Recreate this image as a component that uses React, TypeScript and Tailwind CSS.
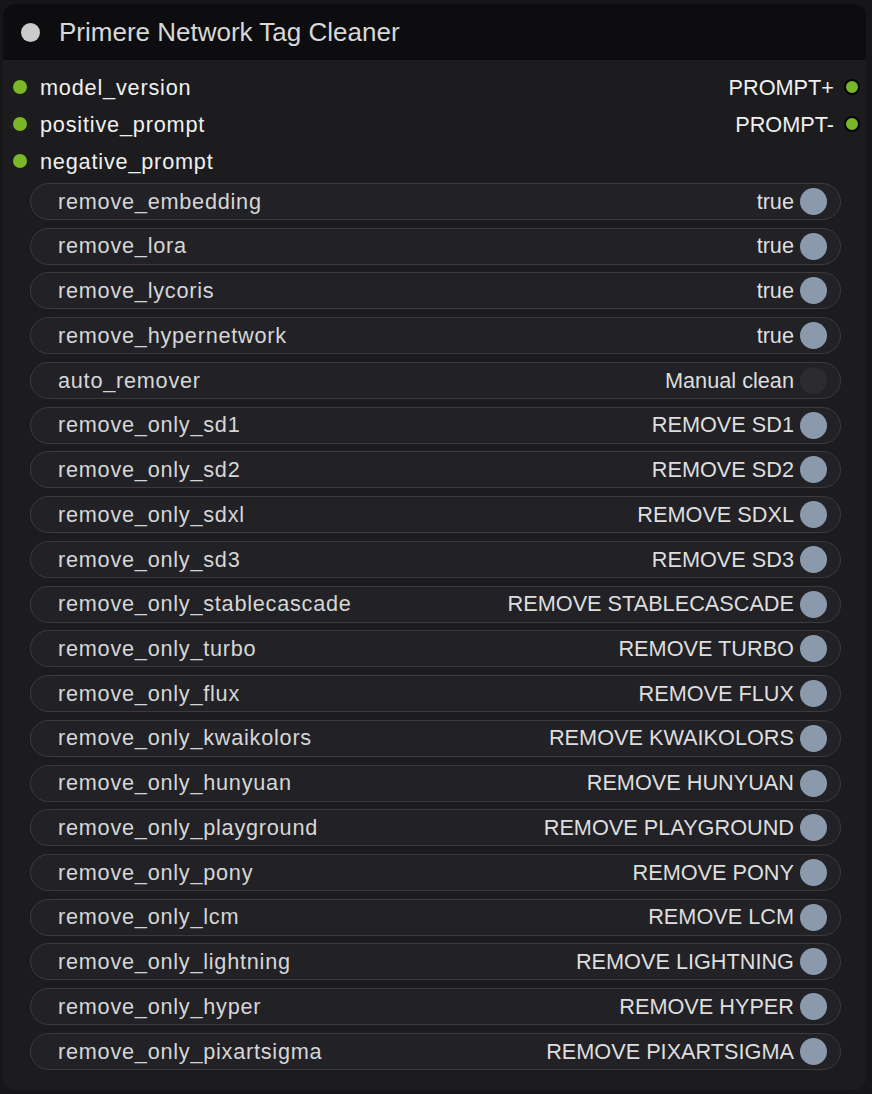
import React from "react";

const widgets: [string, string, boolean][] = [
  ["remove_embedding", "true", true],
  ["remove_lora", "true", true],
  ["remove_lycoris", "true", true],
  ["remove_hypernetwork", "true", true],
  ["auto_remover", "Manual clean", false],
  ["remove_only_sd1", "REMOVE SD1", true],
  ["remove_only_sd2", "REMOVE SD2", true],
  ["remove_only_sdxl", "REMOVE SDXL", true],
  ["remove_only_sd3", "REMOVE SD3", true],
  ["remove_only_stablecascade", "REMOVE STABLECASCADE", true],
  ["remove_only_turbo", "REMOVE TURBO", true],
  ["remove_only_flux", "REMOVE FLUX", true],
  ["remove_only_kwaikolors", "REMOVE KWAIKOLORS", true],
  ["remove_only_hunyuan", "REMOVE HUNYUAN", true],
  ["remove_only_playground", "REMOVE PLAYGROUND", true],
  ["remove_only_pony", "REMOVE PONY", true],
  ["remove_only_lcm", "REMOVE LCM", true],
  ["remove_only_lightning", "REMOVE LIGHTNING", true],
  ["remove_only_hyper", "REMOVE HYPER", true],
  ["remove_only_pixartsigma", "REMOVE PIXARTSIGMA", true],
];

export default function App() {
  return (
    <div
      className="w-[872px] h-[1094px] bg-[#161618] pt-[4px] pl-[3px]"
      style={{ fontFamily: '"Liberation Sans", Arial, sans-serif' }}
    >
      <div className="w-[863px] h-[1086px] rounded-[12px] bg-[#1c1c1f] overflow-hidden flex flex-col">
        <div className="h-[56px] bg-[#0d0d0f] flex items-center shrink-0">
          <div className="ml-[18px] w-[19px] h-[19px] rounded-full bg-[#cbcbcb]" />
          <div className="ml-[19px] text-[26px] text-[#d8d8d8] leading-none">
            Primere Network Tag Cleaner
          </div>
        </div>
        <div className="pt-[9px] flex flex-col">
          {[
            ["model_version", "PROMPT+"],
            ["positive_prompt", "PROMPT-"],
            ["negative_prompt", ""],
          ].map(([inp, out]) => (
            <div key={inp} className="h-[37px] flex items-center justify-between">
              <div className="flex items-center">
                <div className="ml-[10px] w-[14px] h-[14px] rounded-full bg-[#7ab727]" />
                <div className="ml-[13px] text-[21.7px] tracking-[0.8px] text-[#f0f0f0] leading-none">
                  {inp}
                </div>
              </div>
              {out ? (
                <div className="flex items-center">
                  <div className="text-[21.7px] text-[#f0f0f0] leading-none">{out}</div>
                  <div className="ml-[10px] mr-[6px] w-[16px] h-[16px] rounded-full bg-[#7ab727] border-2 border-[#050505]" />
                </div>
              ) : null}
            </div>
          ))}
        </div>
        <div className="mt-[3px] ml-[27px] w-[811px] flex flex-col gap-[7.74px]">
          {widgets.map(([label, value, on]) => (
            <div
              key={label}
              className="h-[37px] rounded-full bg-[#222226] border border-[#3b3b3f] flex items-center justify-between"
            >
              <div className="ml-[27px] text-[21.7px] tracking-[0.75px] text-[#d6d6d6] leading-none">
                {label}
              </div>
              <div className="flex items-center">
                <div className="text-[21.7px] text-[#dedede] leading-none">{value}</div>
                <div
                  className={
                    on
                      ? "ml-[6px] mr-[13px] w-[27px] h-[27px] rounded-full bg-[#8a9aac]"
                      : "ml-[6px] mr-[13px] w-[27px] h-[27px] rounded-full bg-[#2c2c2e]"
                  }
                />
              </div>
            </div>
          ))}
        </div>
      </div>
    </div>
  );
}
